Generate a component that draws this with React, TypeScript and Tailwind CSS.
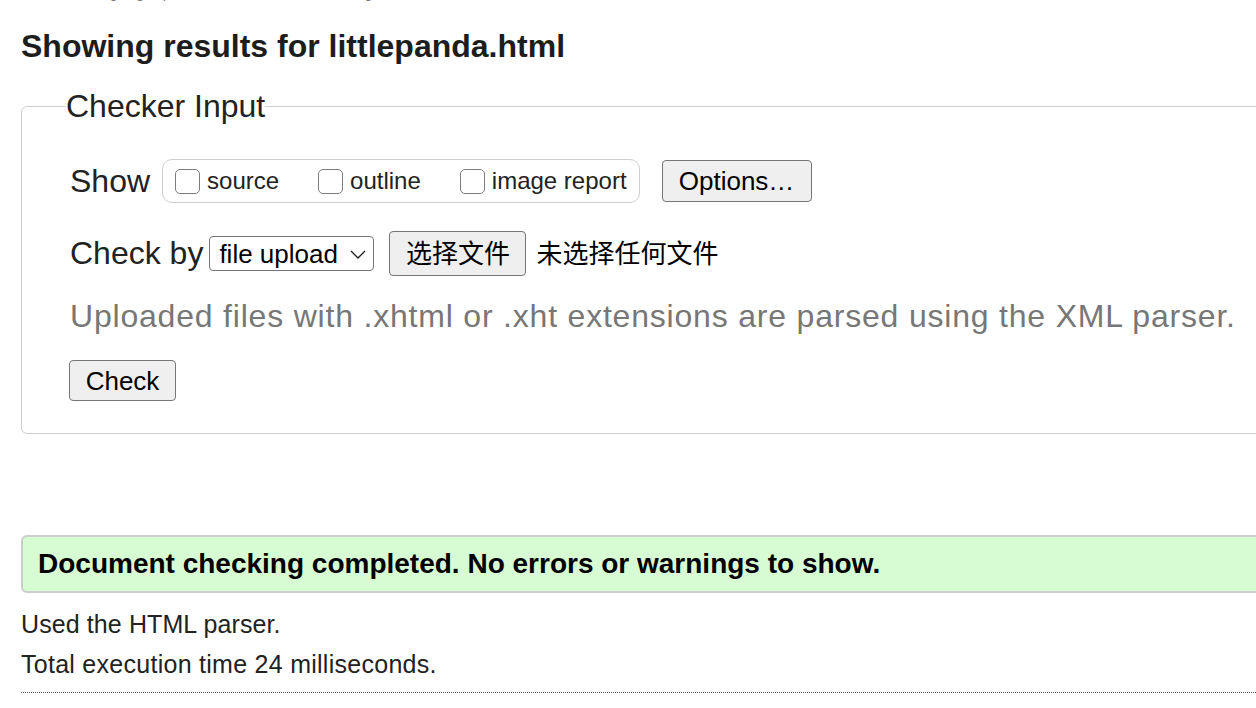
function CheckOption({ label }: { label: string }) {
  return (
    <label className="flex items-center">
      <input
        type="checkbox"
        className="appearance-none w-[25px] h-[25px] rounded-[5px] border border-[#7d7d7d] bg-white"
      />
      <span className="ml-[7px] text-[24px] leading-[28px]">{label}</span>
    </label>
  );
}

export default function App() {
  return (
    <div className="w-[1256px] h-[708px] overflow-hidden bg-white text-[#222] font-['Liberation_Sans','Noto_Sans_CJK_SC',sans-serif]">
      <div className="w-[1320px] pl-[21px]">
        {/* tail of the intro line, scrolled mostly out of view */}
        <div className="h-[4px] overflow-hidden">
          <p className="-mt-[15px] -ml-[17px] text-[14px] leading-[16px] text-[#777] whitespace-nowrap">
            This tool is an ongoing experiment in better HTML checking, and its behavior remains
          </p>
        </div>

        <h2 className="mt-[24px] text-[32px] leading-[37px] font-bold text-[#1d1d1d]">
          Showing results for littlepanda.html
        </h2>

        <fieldset className="mt-[23px] border border-[#cfcfcf] rounded-[6px] px-[48px] pt-[34px] pb-[32px]">
          <legend className="-ml-[4px] text-[32px] leading-[37px]">Checker Input</legend>

          <div className="flex items-center h-[44px]">
            <span className="text-[32px] leading-[37px]">Show</span>
            <div className="ml-[12px] flex items-center gap-[39px] h-[44px] px-[12px] border border-[#cfcfcf] rounded-[10px]">
              <CheckOption label="source" />
              <CheckOption label="outline" />
              <CheckOption label="image report" />
            </div>
            <button className="ml-[22px] w-[150px] h-[42px] border border-[#767676] rounded-[4px] bg-[#efefef] text-[26px] leading-[30px] text-black">
              Options…
            </button>
          </div>

          <div className="mt-[28px] flex items-center h-[45px]">
            <span className="text-[32px] leading-[37px]">Check by</span>
            <div className="relative ml-[6px]">
              <select className="appearance-none w-[165px] h-[35px] pl-[9px] border border-[#767676] rounded-[4px] bg-white text-[26px] leading-[30px] text-black">
                <option>file upload</option>
              </select>
              <svg
                className="absolute right-[8px] top-[14px] pointer-events-none"
                width="16"
                height="9"
                viewBox="0 0 16 9"
                fill="none"
                stroke="#222"
                strokeWidth="1.4"
              >
                <path d="M1 1 L8 8 L15 1" />
              </svg>
            </div>
            <button className="ml-[15px] w-[137px] h-[45px] border border-[#767676] rounded-[4px] bg-[#efefef] text-[26px] leading-[30px] text-black">
              选择文件
            </button>
            <span className="ml-[10px] text-[26px] leading-[30px] text-black">未选择任何文件</span>
          </div>

          <p className="mt-[22px] text-[32px] leading-[37px] tracking-[0.8px] text-[#777]">
            Uploaded files with .xhtml or .xht extensions are parsed using the XML parser.
          </p>

          <button className="mt-[25px] -ml-[1px] w-[107px] h-[41px] border border-[#767676] rounded-[4px] bg-[#efefef] text-[26px] leading-[30px] text-black">
            Check
          </button>
        </fieldset>

        <div className="mt-[101px] h-[58px] flex items-center pl-[15px] border-2 border-[#cccccc] rounded-[6px] bg-[#d7fcd4]">
          <p className="text-[28px] leading-[32px] font-bold text-black">
            Document checking completed. No errors or warnings to show.
          </p>
        </div>

        <p className="mt-[17px] text-[25px] leading-[29px] tracking-[0.1px]">Used the HTML parser.</p>
        <p className="mt-[11px] text-[25px] leading-[29px] tracking-[0.27px]">Total execution time 24 milliseconds.</p>
        <div className="mt-[13px] border-t border-dotted border-[#555]" />
      </div>
    </div>
  );
}
